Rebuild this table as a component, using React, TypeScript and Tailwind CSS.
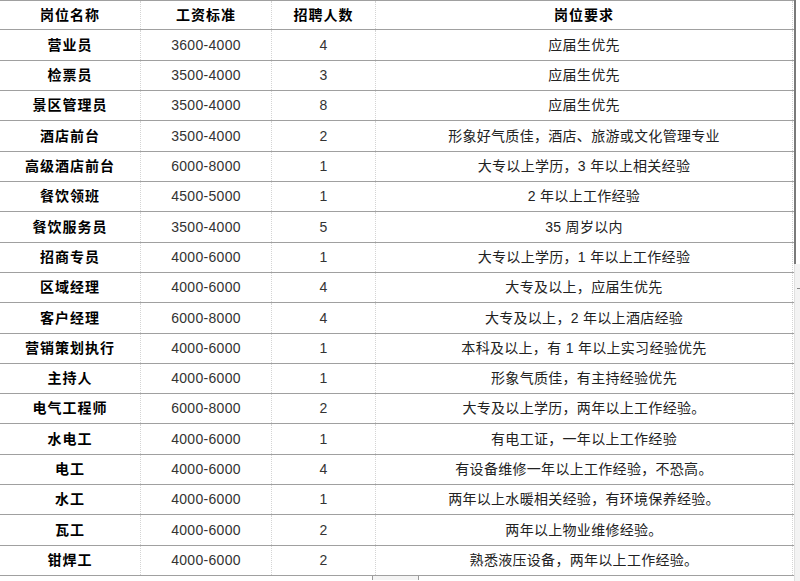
const rows = [
  ['营业员', '3600-4000', '4', '应届生优先'],
  ['检票员', '3500-4000', '3', '应届生优先'],
  ['景区管理员', '3500-4000', '8', '应届生优先'],
  ['酒店前台', '3500-4000', '2', '形象好气质佳，酒店、旅游或文化管理专业'],
  ['高级酒店前台', '6000-8000', '1', '大专以上学历，3 年以上相关经验'],
  ['餐饮领班', '4500-5000', '1', '2 年以上工作经验'],
  ['餐饮服务员', '3500-4000', '5', '35 周岁以内'],
  ['招商专员', '4000-6000', '1', '大专以上学历，1 年以上工作经验'],
  ['区域经理', '4000-6000', '4', '大专及以上，应届生优先'],
  ['客户经理', '6000-8000', '4', '大专及以上，2 年以上酒店经验'],
  ['营销策划执行', '4000-6000', '1', '本科及以上，有 1 年以上实习经验优先'],
  ['主持人', '4000-6000', '1', '形象气质佳，有主持经验优先'],
  ['电气工程师', '6000-8000', '2', '大专及以上学历，两年以上工作经验。'],
  ['水电工', '4000-6000', '1', '有电工证，一年以上工作经验'],
  ['电工', '4000-6000', '4', '有设备维修一年以上工作经验，不恐高。'],
  ['水工', '4000-6000', '1', '两年以上水暖相关经验，有环境保养经验。'],
  ['瓦工', '4000-6000', '2', '两年以上物业维修经验。'],
  ['钳焊工', '4000-6000', '2', '熟悉液压设备，两年以上工作经验。'],
]

// row heights so the grid lines land on whole pixels (576 / 19)
const heights = [
  'h-[30px]', 'h-[31px]', 'h-[30px]', 'h-[30px]', 'h-[31px]', 'h-[30px]', 'h-[30px]',
  'h-[31px]', 'h-[30px]', 'h-[30px]', 'h-[31px]', 'h-[30px]', 'h-[30px]', 'h-[30px]',
  'h-[31px]', 'h-[30px]', 'h-[30px]', 'h-[31px]', 'h-[30px]',
]

const font = '[font-family:"Liberation_Sans","Noto_Sans_CJK_SC",sans-serif]'

function Row({ cells, header, h }: { cells: string[]; header?: boolean; h: string }) {
  return (
    <div className={`flex ${h} border-b border-[#a0a0a0]`}>
      <div className={`w-[141px] flex items-center justify-center font-bold text-black tracking-[1px] border-r border-dotted border-[#d4d4d4]`}>
        {cells[0]}
      </div>
      <div className={`w-[131px] flex items-center justify-center border-r border-dotted border-[#d4d4d4] ${header ? 'font-bold text-black tracking-[1px]' : 'text-[#333] tracking-[0.3px]'}`}>
        {cells[1]}
      </div>
      <div className={`w-[104px] flex items-center justify-center border-r border-dotted border-[#d4d4d4] ${header ? 'font-bold text-black tracking-[1px]' : 'text-[#333]'}`}>
        {cells[2]}
      </div>
      <div className={`w-[417px] flex items-center justify-center border-r border-dotted border-[#d4d4d4] ${header ? 'font-bold text-black tracking-[1px]' : 'text-[#222] tracking-[0.3px]'}`}>
        {cells[3]}
      </div>
    </div>
  )
}

export default function App() {
  return (
    <div className={`w-[800px] h-[581px] bg-white overflow-hidden flex ${font} text-[14px]`}>
      <div className="flex flex-col">
        <div className="w-[794px] border-t border-[#a0a0a0]">
          <Row cells={['岗位名称', '工资标准', '招聘人数', '岗位要求']} header h="h-[29px]" />
          {rows.map((r, i) => (
            <Row key={r[0]} cells={r} h={heights[i + 1]} />
          ))}
        </div>
        {/* bottom scrollbar stub */}
        <div className="flex h-[4px]">
          <div className="w-[372px]" />
          <div className="w-[47px] border-x border-[#9a9a9a] bg-[#f4f4f4]" />
        </div>
      </div>
      {/* right edge scrollbar */}
      <div className="flex flex-col w-[6px]">
        <div className="h-[264px] border-l-2 border-[#7a7a7a]" />
        <div className="flex-1 bg-[#f3f3f3] border-l border-[#e0e0e0] flex flex-col items-end pt-[24px]">
          <div className="w-[3px] h-[1px] bg-[#888]" />
        </div>
      </div>
    </div>
  )
}
